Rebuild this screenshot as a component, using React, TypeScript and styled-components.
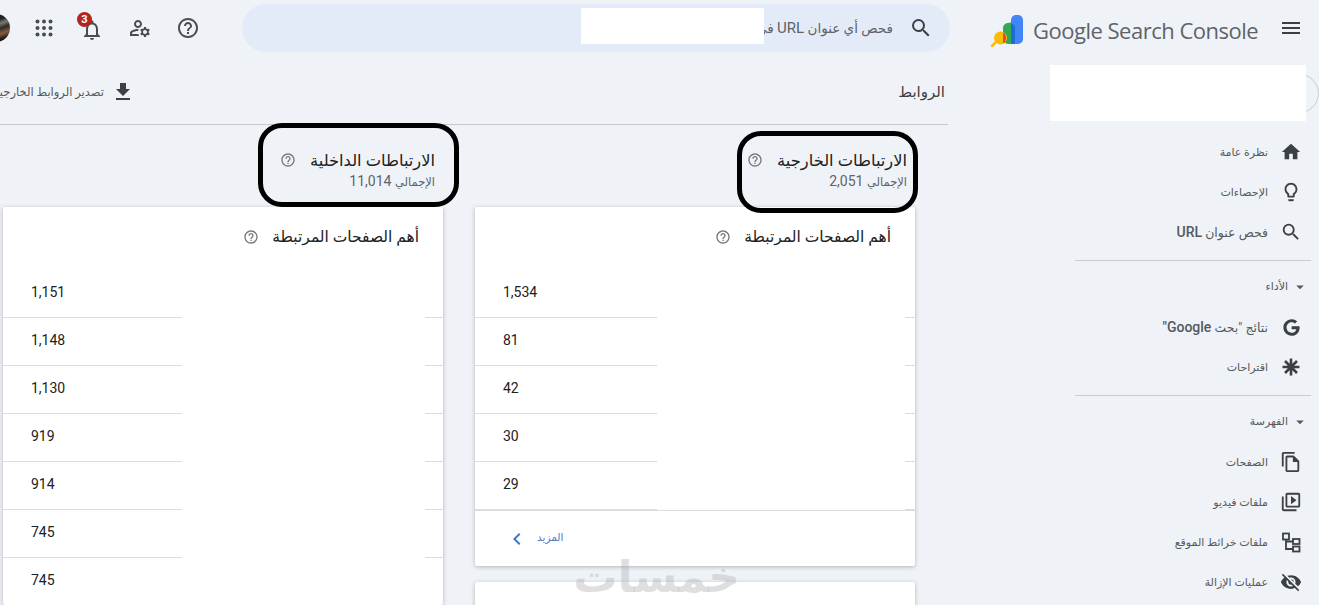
import React from "react";
import styled, { createGlobalStyle } from "styled-components";
import { FaGoogle } from "react-icons/fa";
import {
    MdArrowDropDown,
    MdChevronLeft,
    MdFileDownload,
    MdHelpOutline,
    MdHome,
    MdMenu,
    MdOutlineFileCopy,
    MdOutlineLightbulb,
    MdOutlineManageAccounts,
    MdOutlineNotifications,
    MdOutlineVideoLibrary,
    MdSearch,
    MdVisibilityOff,
} from "react-icons/md";

const GlobalStyle = createGlobalStyle`
    html, body {
        margin: 0;
        padding: 0;
        overflow: hidden;
        background: #eff3f8;
    }
    * {
        box-sizing: border-box;
    }
`;

const Page = styled.div`
    direction: rtl;
    position: relative;
    width: 1319px;
    height: 605px;
    overflow: hidden;
    background: #eff3f8;
    color: #3c4043;
    font-family: Roboto, "DejaVu Sans", sans-serif;
`;

const Header = styled.header`
    display: flex;
    align-items: center;
    height: 56px;
    padding-right: 16px;
`;

const MenuButton = styled.div`
    display: flex;
    width: 24px;
    margin-left: 20px;
    font-size: 24px;
    color: #3c4043;
`;

const Brand = styled.div`
    direction: ltr;
    display: flex;
    align-items: center;
    gap: 7px;
    width: 269px;
    flex-shrink: 0;
    margin-left: 40px;
    padding-top: 4px;
    svg {
        flex-shrink: 0;
    }
`;

const BrandName = styled.span`
    font-family: "Open Sans", sans-serif;
    font-size: 22px;
    letter-spacing: -0.5px;
    color: #5f6368;
    white-space: nowrap;
`;

const SearchBar = styled.div`
    position: relative;
    display: flex;
    align-items: center;
    gap: 16px;
    width: 708px;
    height: 48px;
    flex-shrink: 0;
    margin-left: 30px;
    padding-right: 17px;
    border-radius: 24px;
    background: #e3ebf9;
    font-size: 13.5px;
    color: #5f6368;
    white-space: nowrap;
    svg {
        font-size: 24px;
        color: #3c4043;
        flex-shrink: 0;
    }
    b {
        font-size: 15px;
        font-weight: 400;
    }
`;

const SearchMask = styled.div`
    position: absolute;
    top: 4px;
    left: 339px;
    width: 183px;
    height: 36px;
    background: #fff;
`;

const HeaderIcon = styled.div<{ $drop?: number }>`
    position: relative;
    display: flex;
    align-items: center;
    justify-content: center;
    width: 48px;
    height: 48px;
    flex-shrink: 0;
    padding-top: ${(p) => p.$drop ?? 0}px;
    font-size: 24px;
    color: #4a4d50;
`;

const Badge = styled.span`
    position: absolute;
    top: 8px;
    left: 9px;
    width: 15px;
    height: 15px;
    border-radius: 50%;
    background: #b3261e;
    color: #fff;
    font-size: 11px;
    font-weight: 700;
    line-height: 15px;
    text-align: center;
`;

const Avatar = styled.div`
    width: 28px;
    height: 28px;
    flex-shrink: 0;
    margin-right: 10px;
    border-radius: 50%;
    background: linear-gradient(160deg, #1d2220 0 30%, #7c7a70 42%, #2a2c2a 55%, #8a5a3c 70%, #151716 85%);
`;

const Body = styled.div`
    display: flex;
    align-items: flex-start;
`;

const Sidebar = styled.aside`
    width: 369px;
    flex-shrink: 0;
    padding-top: 9px;
`;

const PropertyPicker = styled.div`
    position: relative;
    height: 39px;
    margin: 9px 0 19px 105px;
    border: 1px solid #c9ccd1;
    border-radius: 20px;
`;

const PickerMask = styled.div`
    position: absolute;
    top: -10px;
    right: 12px;
    width: 256px;
    height: 56px;
    background: #fff;
`;

const NavItem = styled.div<{ $wide?: boolean }>`
    display: flex;
    align-items: center;
    height: 40px;
    gap: 11px;
    padding-right: 16px;
    font-size: ${(p) => (p.$wide ? "12.5px" : "11px")};
    color: #55595d;
    white-space: nowrap;
`;

const NavIcon = styled.span`
    display: flex;
    align-items: center;
    justify-content: center;
    width: 24px;
    height: 24px;
    font-size: 22px;
    color: #3c4043;
`;

const NavLatin = styled.b`
    font-family: Roboto, sans-serif;
    font-size: 14px;
    font-weight: 500;
`;

const NavDivider = styled.hr`
    height: 1px;
    margin: 8px 8px 8px 125px;
    border: 0;
    background: #c9ccd1;
`;

const NavSection = styled.div`
    display: flex;
    align-items: center;
    gap: 3px;
    height: 35px;
    padding-right: 10px;
    margin-bottom: 3px;
    font-size: 11px;
    color: #55595d;
    svg {
        font-size: 18px;
    }
`;

const Main = styled.main`
    width: 950px;
    flex-shrink: 0;
`;

const TitleBar = styled.div`
    display: flex;
    align-items: center;
    justify-content: space-between;
    height: 69px;
    margin-right: 2px;
    padding: 4px 3px 0 0;
    border-bottom: 1px solid #c6c9ce;
`;

const PageTitle = styled.h1`
    margin: 0;
    font-size: 15px;
    font-weight: 400;
    color: #3c4043;
`;

const ExportLink = styled.div`
    display: flex;
    align-items: center;
    gap: 7px;
    margin-left: -3px;
    width: 138px;
    flex-shrink: 0;
    font-size: 11.5px;
    white-space: nowrap;
    color: #55595d;
    svg {
        font-size: 24px;
        color: #3c4043;
        flex-shrink: 0;
    }
`;

const Columns = styled.div`
    display: flex;
    gap: 32px;
    padding-right: 35px;
`;

const Column = styled.section`
    display: flex;
    flex-direction: column;
    width: 440px;
    flex-shrink: 0;
`;

const ColumnHead = styled.div`
    position: relative;
    height: 82px;
    padding: 25px 8px 0 0;
`;

const HeadTitle = styled.div`
    display: flex;
    align-items: center;
    gap: 14px;
    height: 20px;
    font-size: 16.3px;
    color: #202124;
    svg {
        font-size: 16px;
        color: #75787c;
    }
`;

const HeadTotal = styled.div`
    margin-top: 3px;
    font-size: 14px;
    color: #5f6368;
    small {
        font-size: 11.5px;
    }
`;

const Callout = styled.div<{ $right: number; $top: number; $width: number; $height: number }>`
    position: absolute;
    top: ${(p) => p.$top}px;
    right: ${(p) => p.$right}px;
    width: ${(p) => p.$width}px;
    height: ${(p) => p.$height}px;
    border: 5px solid #000;
    border-radius: 24px;
    z-index: 2;
`;

const Card = styled.div`
    flex-shrink: 0;
    background: #fff;
    border-radius: 2px;
    box-shadow: 0 1px 4px rgba(60, 64, 67, 0.35);
`;

const CardTitle = styled.div`
    display: flex;
    align-items: center;
    gap: 13px;
    height: 63px;
    padding: 0 24px 3px 0;
    font-size: 15.5px;
    color: #202124;
    svg {
        font-size: 16px;
        color: #75787c;
    }
`;

const Row = styled.div`
    position: relative;
    display: flex;
    align-items: center;
    justify-content: flex-end;
    height: 48px;
    padding-left: 28px;
    padding-bottom: 3px;
    font-size: 14px;
    color: #202124;
    border-bottom: 1px solid #dadce0;
    &:last-child {
        height: 47px;
        border-bottom: 0;
    }
    &:last-child > span {
        bottom: 0;
    }
`;

const RowMask = styled.span<{ $start: number; $end: number }>`
    position: absolute;
    top: 0;
    bottom: -1px;
    left: ${(p) => p.$start}px;
    right: ${(p) => p.$end}px;
    background: #fff;
`;

const CardFooter = styled.div`
    display: flex;
    align-items: center;
    gap: 8px;
    height: 56px;
    justify-content: flex-end;
    padding-left: 30px;
    border-top: 1px solid #dadce0;
    font-size: 10.5px;
    color: #4a7cc0;
    span {
        margin-bottom: 3px;
    }
    svg {
        font-size: 24px;
        color: #3f78c9;
    }
`;

const StubCard = styled(Card)`
    height: 60px;
    margin-top: 16px;
`;

const Watermark = styled.div`
    position: absolute;
    top: 547px;
    left: 578px;
    width: 162px;
    font-size: 44px;
    font-weight: 700;
    line-height: 60px;
    text-align: center;
    color: rgba(170, 172, 176, 0.38);
    z-index: 3;
    white-space: nowrap;
`;

const Logo = () => (
    <svg width="36" height="34" viewBox="0 0 36 34">
        <rect x="21" y="2" width="12" height="29" rx="5" fill="#4285f4" />
        <path d="M18 10a5 5 0 0 1 7 4.500V31H18a5 5 0 0 1-5-5V15a5 5 0 0 1 5-5z" fill="#34a853" />
        <path d="M21 10.500a5 5 0 0 1 4 4.500V31h-4z" fill="#1a6fd0" />
        <circle cx="10.500" cy="25" r="6.500" fill="#fbbc04" />
        <path d="M13 19.500a6.500 6.500 0 0 1 0 11z" fill="#ea4335" />
        <path d="M6 29l-4 4" stroke="#fbbc04" strokeWidth="2.500" strokeLinecap="round" />
    </svg>
);

const AppsIcon = () => (
    <svg width="24" height="24" viewBox="0 0 24 24" fill="currentColor">
        {[5.5, 12, 18.5].flatMap((y) =>
            [5.5, 12, 18.5].map((x) => <circle key={`${x}-${y}`} cx={x} cy={y} r="2" />)
        )}
    </svg>
);

const AsteriskIcon = () => (
    <svg width="24" height="24" viewBox="0 0 24 24" fill="none" stroke="currentColor" strokeWidth="2.600">
        <path d="M12 3.500v17M3.500 12h17M6 6l12 12M18 6L6 18" />
    </svg>
);

const SitemapIcon = () => (
    <svg width="24" height="24" viewBox="0 0 24 24" fill="none" stroke="currentColor" strokeWidth="1.800">
        <rect x="4" y="3.500" width="6" height="6" />
        <rect x="14" y="9" width="6.500" height="5" />
        <rect x="14" y="16.500" width="6.500" height="5" />
        <path d="M7 9.500v9.500h7M7 11.500h7" />
    </svg>
);

const topNav = [
    { icon: <MdHome />, label: "نظرة عامة" },
    { icon: <MdOutlineLightbulb />, label: "الإحصاءات" },
    { icon: <MdSearch />, label: "فحص عنوان", latin: "URL" },
];

const performanceNav = [
    { icon: <FaGoogle size={17} />, label: "نتائج \"بحث", latin: "Google\"" },
    { icon: <AsteriskIcon />, label: "اقتراحات" },
];

const indexNav = [
    { icon: <MdOutlineFileCopy />, label: "الصفحات" },
    { icon: <MdOutlineVideoLibrary />, label: "ملفات فيديو" },
    { icon: <SitemapIcon />, label: "ملفات خرائط الموقع" },
    { icon: <MdVisibilityOff />, label: "عمليات الإزالة" },
];

const externalCounts = ["1,534", "81", "42", "30", "29"];
const internalCounts = ["1,151", "1,148", "1,130", "919", "914", "745", "745"];

type NavEntry = { icon: React.ReactNode; label: string; latin?: string };

const NavList = ({ items }: { items: NavEntry[] }) => (
    <>
        {items.map((item) => (
            <NavItem key={item.label} $wide={!!item.latin}>
                <NavIcon>{item.icon}</NavIcon>
                <span>
                    {item.label} {item.latin && <NavLatin>{item.latin}</NavLatin>}
                </span>
            </NavItem>
        ))}
    </>
);

const App = () => {
    return (
        <Page>
            <GlobalStyle />
            <Header>
                <MenuButton>
                    <MdMenu />
                </MenuButton>
                <Brand>
                    <Logo />
                    <BrandName>Google Search Console</BrandName>
                </Brand>
                <SearchBar>
                    <MdSearch />
                    <span>
                        فحص أي عنوان <b>URL</b> في
                    </span>
                    <SearchMask />
                </SearchBar>
                <HeaderIcon>
                    <MdHelpOutline />
                </HeaderIcon>
                <HeaderIcon>
                    <MdOutlineManageAccounts />
                </HeaderIcon>
                <HeaderIcon $drop={4}>
                    <MdOutlineNotifications />
                    <Badge>3</Badge>
                </HeaderIcon>
                <HeaderIcon>
                    <AppsIcon />
                </HeaderIcon>
                <Avatar />
            </Header>
            <Body>
                <Sidebar>
                    <PropertyPicker>
                        <PickerMask />
                    </PropertyPicker>
                    <NavList items={topNav} />
                    <NavDivider />
                    <NavSection>
                        <MdArrowDropDown />
                        <span>الأداء</span>
                    </NavSection>
                    <NavList items={performanceNav} />
                    <NavDivider />
                    <NavSection>
                        <MdArrowDropDown />
                        <span>الفهرسة</span>
                    </NavSection>
                    <NavList items={indexNav} />
                </Sidebar>
                <Main>
                    <TitleBar>
                        <PageTitle>الروابط</PageTitle>
                        <ExportLink>
                            <MdFileDownload />
                            <span>تصدير الروابط الخارجية</span>
                        </ExportLink>
                    </TitleBar>
                    <Columns>
                        <Column>
                            <ColumnHead>
                                <HeadTitle>
                                    <span>الارتباطات الخارجية</span>
                                    <MdHelpOutline />
                                </HeadTitle>
                                <HeadTotal>
                                    <small>الإجمالي</small> 2,051
                                </HeadTotal>
                                <Callout $right={-3} $top={6} $width={181} $height={82} />
                            </ColumnHead>
                            <Card>
                                <CardTitle>
                                    <span>أهم الصفحات المرتبطة</span>
                                    <MdHelpOutline />
                                </CardTitle>
                                {externalCounts.map((count, i) => (
                                    <Row key={i}>
                                        {count}
                                        <RowMask $start={182} $end={10} />
                                    </Row>
                                ))}
                                <CardFooter>
                                    <span>المزيد</span>
                                    <MdChevronLeft />
                                </CardFooter>
                            </Card>
                            <StubCard />
                        </Column>
                        <Column>
                            <ColumnHead>
                                <HeadTitle>
                                    <span>الارتباطات الداخلية</span>
                                    <MdHelpOutline />
                                </HeadTitle>
                                <HeadTotal>
                                    <small>الإجمالي</small> 11,014
                                </HeadTotal>
                                <Callout $right={-16} $top={-2} $width={201} $height={84} />
                            </ColumnHead>
                            <Card>
                                <CardTitle>
                                    <span>أهم الصفحات المرتبطة</span>
                                    <MdHelpOutline />
                                </CardTitle>
                                {internalCounts.map((count, i) => (
                                    <Row key={i}>
                                        {count}
                                        <RowMask $start={179} $end={18} />
                                    </Row>
                                ))}
                            </Card>
                        </Column>
                    </Columns>
                </Main>
            </Body>
            <Watermark>خمسات</Watermark>
        </Page>
    );
};

export default App;
